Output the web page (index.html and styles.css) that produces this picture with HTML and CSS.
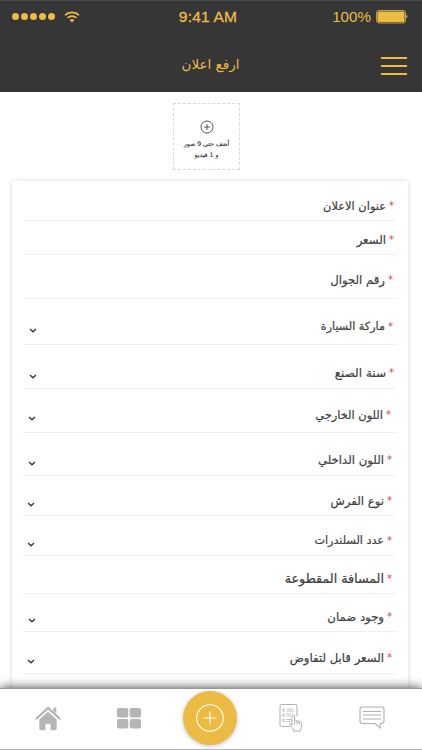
FILE: index.html
```html
<!DOCTYPE html>
<html lang="ar" dir="rtl">
<head>
    <meta charset="UTF-8">
    <meta name="viewport" content="width=device-width, initial-scale=1.0">
    <title>ارفع اعلان</title>
    <link rel="stylesheet" href="styles.css">
</head>
<body>
    <div class="app">
        <header class="header">
            <div class="status-bar" dir="ltr">
                <div class="signal">
                    <i></i><i></i><i></i><i></i><i></i>
                    <svg class="wifi" viewBox="0 0 16 12" width="16" height="12">
                        <path d="M1 4.2a10.2 10.2 0 0 1 14 0M3.6 6.9a6.4 6.4 0 0 1 8.8 0" fill="none" stroke="#ebbd46" stroke-width="1.7"/>
                        <path d="M5.6 9a3.6 3.6 0 0 1 4.8 0L8 11.6z" fill="#ebbd46"/>
                    </svg>
                </div>
                <span class="time">9:41 AM</span>
                <div class="battery">
                    <span class="percent">100%</span>
                    <svg viewBox="0 0 32 14" width="32" height="14">
                        <rect x="0.5" y="0.5" width="29" height="12.5" rx="2.5" fill="none" stroke="#ebbd46" stroke-width="0.8"/>
                        <rect x="1.5" y="1.5" width="27" height="10.5" rx="1.5" fill="#ebbd46"/>
                        <path d="M30.3 4.5q2.2 2 0 4z" fill="#ebbd46"/>
                    </svg>
                </div>
            </div>
            <div class="title-bar">
                <button class="menu-btn"><i></i><i></i><i></i></button>
                <h1>ارفع اعلان</h1>
            </div>
        </header>

        <main class="content">
            <div class="upload">
                <svg viewBox="0 0 14 14" width="14" height="14">
                    <path d="M7 1a6 6 0 1 0 0 12A6 6 0 0 0 7 1zM7 4v6M4 7h6" fill="none" stroke="#444" stroke-width="0.9"/>
                </svg>
                <span class="upload-main">أضف حتى 9 صور</span>
                <span class="upload-sub">و 1 فيديو</span>
            </div>

            <form class="card">
                <div class="field"><b>*</b><label>عنوان الاعلان</label></div>
                <div class="field"><b>*</b><label>السعر</label></div>
                <div class="field"><b>*</b><label>رقم الجوال</label></div>
                <div class="field select"><b>*</b><label>ماركة السيارة</label><svg viewBox="0 0 8 5"><path d="M1 1l3 2.8L7 1"/></svg></div>
                <div class="field select"><b>*</b><label>سنة الصنع</label><svg viewBox="0 0 8 5"><path d="M1 1l3 2.8L7 1"/></svg></div>
                <div class="field select"><b>*</b><label>اللون الخارجي</label><svg viewBox="0 0 8 5"><path d="M1 1l3 2.8L7 1"/></svg></div>
                <div class="field select"><b>*</b><label>اللون الداخلي</label><svg viewBox="0 0 8 5"><path d="M1 1l3 2.8L7 1"/></svg></div>
                <div class="field select"><b>*</b><label>نوع الفرش</label><svg viewBox="0 0 8 5"><path d="M1 1l3 2.8L7 1"/></svg></div>
                <div class="field select"><b>*</b><label>عدد السلندرات</label><svg viewBox="0 0 8 5"><path d="M1 1l3 2.8L7 1"/></svg></div>
                <div class="field"><b>*</b><label>المسافة المقطوعة</label></div>
                <div class="field select"><b>*</b><label>وجود ضمان</label><svg viewBox="0 0 8 5"><path d="M1 1l3 2.8L7 1"/></svg></div>
                <div class="field select"><b>*</b><label>السعر قابل لتفاوض</label><svg viewBox="0 0 8 5"><path d="M1 1l3 2.8L7 1"/></svg></div>
            </form>
        </main>

        <nav class="tab-bar" dir="ltr">
            <a class="tab home">
                <svg viewBox="0 0 26 26" width="26" height="26">
                    <path d="M1.5 13.5L13 2.8l11.5 10.7" fill="none" stroke="#b5b5b5" stroke-width="2.3" stroke-linecap="round" stroke-linejoin="round"/>
                    <path d="M18.3 2.5h3v6l-3-2.8z" fill="#b5b5b5"/>
                    <path d="M4.3 14.6L13 6.7l8.7 7.9v8.8q0 1.8-1.8 1.8h-4.4v-6.5h-5v6.5H6.1q-1.8 0-1.8-1.8z" fill="#b5b5b5"/>
                </svg>
            </a>
            <a class="tab grid">
                <svg viewBox="0 0 24 21" width="24" height="21">
                    <g fill="#b5b5b5">
                        <rect x="0" y="0" width="11.3" height="9.5" rx="2"/>
                        <rect x="12.7" y="0" width="11.3" height="9.5" rx="2"/>
                        <rect x="0" y="11" width="11.3" height="9.5" rx="2"/>
                        <rect x="12.7" y="11" width="11.3" height="9.5" rx="2"/>
                    </g>
                </svg>
            </a>
            <a class="add">
                <svg viewBox="0 0 28 28" width="28" height="28">
                    <path d="M14 .7a13.3 13.3 0 1 0 0 26.6A13.3 13.3 0 0 0 14 .7zM14 7.5v13M7.5 14h13" fill="none" stroke="#fff" stroke-width="1.1"/>
                </svg>
            </a>
            <a class="tab list">
                <svg viewBox="0 0 24 30" width="24" height="30" fill="none" stroke="#b0b0b0" stroke-width="1" stroke-linecap="round" stroke-linejoin="round">
                    <path d="M10.5 23.5h-8Q1 23.5 1 22V3q0-1.5 1.5-1.5h14Q18 1.5 18 3v10"/>
                    <path d="M5.5 6H3.8v2h2M8 6h3.5M12.500 6h1M8 8h7M5.500 11H3.800v2h2M8 11h3.500M8 13h3.500M5.500 16.500H3.800v2h2M8 16.500h3.500M8 18.500h3" stroke-width="0.8"/>
                    <path d="M13 22v-9c0-1.900 2.600-1.900 2.600 0v4.500c.8-.6 2.200-.3 2.400.7.800-.5 2-.2 2.200.7 1-.4 2.300 0 2.300 1.300v3.600c0 1.500-1 2-1 3.200v1h-7v-1.300c-.9-1.700-3.600-3.600-3.600-5.500 0-1.400 1.500-1.200 2.100.8M15.600 17.500V21M18 18.200V21M20.200 18.900V21"/>
                </svg>
            </a>
            <a class="tab chat">
                <svg viewBox="0 0 26 24" width="26" height="24" fill="none" stroke="#b0b0b0" stroke-width="1.1" stroke-linecap="round" stroke-linejoin="round">
                    <path d="M3.5 1h19Q25 1 25 3.5V15q0 2.5-2.5 2.5h-1.200v4.700L16 17.500H3.500Q1 17.500 1 15V3.500Q1 1 3.500 1z"/>
                    <path d="M4.5 5.5h17M4.5 9h17M4.5 13h17"/>
                </svg>
            </a>
        </nav>
    </div>
</body>
</html>
```
FILE: styles.css
```css
* {
    box-sizing: border-box;
}

body {
    margin: 0;
    background: #fff;
    font-family: "DejaVu Sans", sans-serif;
}

.app {
    width: 422px;
    height: 750px;
    display: flex;
    flex-direction: column;
    overflow: hidden;
}

.header {
    height: 92px;
    flex: none;
    background: #373636;
    border-top: 1px solid #484848;
    color: #ebbd46;
}

.status-bar {
    display: grid;
    grid-template-columns: 1fr auto 1fr;
    align-items: center;
    height: 31px;
    padding: 0 14px 0 12px;
    font-family: "Liberation Sans", Arial, sans-serif;
    font-size: 14px;
}

.signal {
    display: flex;
    align-items: center;
    gap: 2px;
}

.signal i {
    width: 7px;
    height: 7px;
    border-radius: 50%;
    background: #ebbd46;
}

.wifi {
    margin-left: 7px;
}

.time {
    margin-right: 4px;
    font-size: 15.5px;
    letter-spacing: 0.2px;
    -webkit-text-stroke: 0.3px #ebbd46;
}

.battery {
    display: flex;
    align-items: center;
    justify-content: flex-end;
    gap: 5px;
}

.percent {
    font-size: 15.2px;
}

.title-bar {
    display: grid;
    grid-template-columns: 26px 1fr 26px;
    align-items: center;
    padding: 0 15px;
    height: 67px;
}

.title-bar h1 {
    margin: 0 0 4px 0;
    padding-right: 1px;
    text-align: center;
    font-size: 13.5px;
    font-weight: normal;
}

.menu-btn {
    width: 26px;
    padding: 0;
    border: none;
    background: none;
    display: flex;
    flex-direction: column;
    gap: 6px;
}

.menu-btn i {
    height: 2px;
    background: #ebbd46;
}

.content {
    flex: 1;
    min-height: 0;
    display: flex;
    flex-direction: column;
    padding: 11px 14px 0 12px;
    overflow: hidden;
}

.upload {
    width: 67px;
    height: 67px;
    flex: none;
    margin: 0 168px 11px 0;
    border: 1px dashed #d8d8d8;
    display: flex;
    flex-direction: column;
    align-items: center;
    padding-top: 16px;
    color: #333;
    white-space: nowrap;
}

.upload span {
    font-size: 6.2px;
    line-height: 11px;
    -webkit-text-stroke: 0.15px #333;
}

.upload-main {
    margin-top: 4px;
}

.card {
    flex: none;
    height: 560px;
    background: #fff;
    border-radius: 3px;
    box-shadow: 0 0 5px rgba(0, 0, 0, 0.16);
    padding: 0 11px 0 12px;
}

.field {
    display: flex;
    align-items: flex-end;
    height: 40px;
    padding: 0 3px 6px 5px;
    border-bottom: 1px solid #f0f0f0;
    color: #404040;
    white-space: nowrap;
}

.field b {
    width: 8px;
    color: #d94350;
    font-size: 10px;
    font-weight: normal;
    line-height: 16px;
}

.field label {
    font-size: 11.7px;
    line-height: 16px;
    -webkit-text-stroke: 0.2px #404040;
}

.field svg {
    width: 8px;
    height: 5px;
    margin-right: auto;
    margin-bottom: 2px;
    fill: none;
    stroke: #333;
    stroke-width: 1.3;
}

/* row heights and label sizes */
.field:nth-child(1) label { font-size: 11.4px; }
.field:nth-child(2) { height: 34px; }
.field:nth-child(3) { height: 44px; padding: 0 4px 10px 5px; }
.field:nth-child(4) { height: 46px; padding: 0 4px 9px 5px; }
.field:nth-child(4) label { font-size: 11.2px; }
.field:nth-child(5) { height: 44px; padding-bottom: 7px; }
.field:nth-child(5) label { font-size: 12px; }
.field:nth-child(6) { height: 44px; padding: 0 5px 9px 5px; }
.field:nth-child(6) label { font-size: 11.4px; }
.field:nth-child(7) { height: 43px; padding: 0 4px 7px 5px; }
.field:nth-child(8) { height: 40px; }
.field:nth-child(9) { height: 40px; }
.field:nth-child(9) label { font-size: 11.2px; }
.field:nth-child(10) { height: 38px; padding-right: 4px; }
.field:nth-child(10) label { font-size: 12.7px; }
.field:nth-child(11) { height: 38px; padding-right: 4px; }
.field:nth-child(12) { height: 42px; padding-bottom: 7px; }

.field:nth-child(n+6) {
    margin-left: -1px;
    margin-right: 1px;
}

.field:nth-child(8),
.field:nth-child(9),
.field:nth-child(12) {
    margin-left: -2px;
    margin-right: 2px;
}

.tab-bar {
    position: relative;
    z-index: 1;
    height: 62px;
    flex: none;
    display: grid;
    grid-template-columns: repeat(5, 81px);
    justify-content: center;
    align-items: center;
    padding: 0 3px 2px 0;
    background: #fff;
    border-top: 1px solid #999;
    border-bottom: 1px solid #b5b5b5;
    box-shadow: 0 0 10px rgba(0, 0, 0, 0.75);
}

.tab {
    display: flex;
    justify-content: center;
}

.add {
    width: 54px;
    height: 54px;
    margin: 0 auto;
    border-radius: 50%;
    background: #ebbb44;
    box-shadow: 0 1px 4px rgba(0, 0, 0, 0.25);
    display: flex;
    align-items: center;
    justify-content: center;
}
```
